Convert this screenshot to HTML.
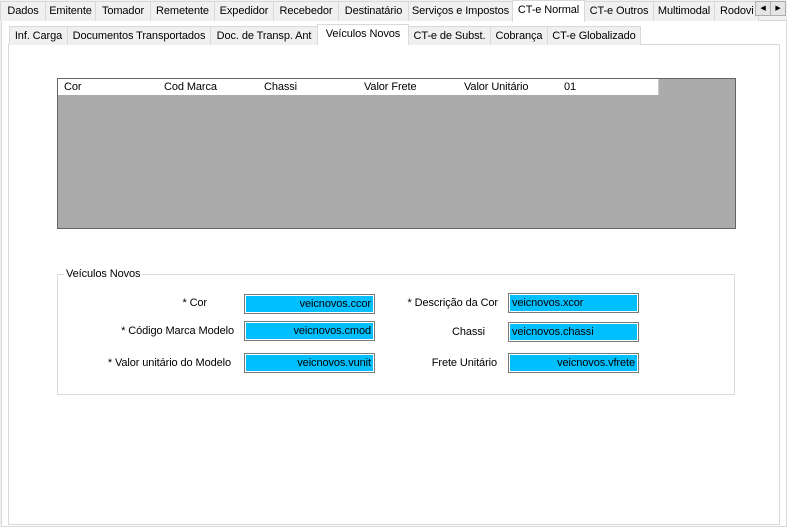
<!DOCTYPE html>
<html><head><meta charset="utf-8"><style>
*{margin:0;padding:0;box-sizing:border-box}
body{width:787px;height:527px;background:#f0f0f0;font-family:"Liberation Sans",sans-serif;font-size:11px;color:#000;position:relative;overflow:hidden;letter-spacing:-0.1px}
.a{position:absolute;white-space:nowrap}
.t{position:absolute;top:1px;height:20px;border:1px solid #d9d9d9;border-bottom:none;background:#f0f0f0;text-align:center;line-height:19px}
.t2{position:absolute;top:26px;height:19px;border:1px solid #d9d9d9;border-bottom:none;background:#f0f0f0;text-align:center;line-height:18px}
.sel{background:#fff;z-index:2}
.h{position:absolute;top:79px;height:16px;background:#fff;border-right:1px solid #c8c8c8;line-height:17px;padding-left:6px}
.in{position:absolute;width:131px;height:20px;border:1px solid #7a7a7a;background:#00bfff;box-shadow:inset 0 0 0 1px #fff;line-height:19px;padding:0 3px;color:#000}
.r{text-align:right}
.lb{position:absolute;text-align:right;width:200px}
</style></head><body>
<div class="a" style="left:1px;top:20px;width:786px;height:507px;border:1px solid #d9d9d9;background:#fff"></div>
<div class="t" style="left:0;width:46px">Dados</div>
<div class="t" style="left:45px;width:51px">Emitente</div>
<div class="t" style="left:95px;width:56px">Tomador</div>
<div class="t" style="left:150px;width:65px">Remetente</div>
<div class="t" style="left:214px;width:60px">Expedidor</div>
<div class="t" style="left:273px;width:66px">Recebedor</div>
<div class="t" style="left:338px;width:71px">Destinatário</div>
<div class="t" style="left:408px;width:105px">Serviços e Impostos</div>
<div class="t sel" style="left:512px;width:73px;top:0;height:22px;line-height:18px">CT-e Normal</div>
<div class="t" style="left:584px;width:70px">CT-e Outros</div>
<div class="t" style="left:653px;width:62px">Multimodal</div>
<div class="t" style="left:714px;width:45px;text-align:left;padding-left:5px;overflow:hidden">Rodovi</div>
<div class="a" style="left:755px;top:1px;width:16px;height:15px;border:1px solid #adadad;background:#e5e5e5;font-size:7px;text-align:center;line-height:13px">◀</div>
<div class="a" style="left:770px;top:1px;width:16px;height:15px;border:1px solid #adadad;background:#e5e5e5;font-size:7px;text-align:center;line-height:13px">▶</div>

<div class="a" style="left:8px;top:44px;width:772px;height:481px;border:1px solid #d9d9d9;background:#fff"></div>
<div class="t2" style="left:9px;width:59px">Inf. Carga</div>
<div class="t2" style="left:67px;width:144px">Documentos Transportados</div>
<div class="t2" style="left:210px;width:108px">Doc. de Transp. Ant</div>
<div class="t2 sel" style="left:317px;width:92px;top:24px;height:21px;line-height:18px">Veículos Novos</div>
<div class="t2" style="left:408px;width:83px">CT-e de Subst.</div>
<div class="t2" style="left:490px;width:58px">Cobrança</div>
<div class="t2" style="left:547px;width:94px">CT-e Globalizado</div>

<div class="a" style="left:57px;top:78px;width:679px;height:151px;border:1px solid #646464;background:#ababab"></div>
<div class="h" style="left:58px;width:101px">Cor</div>
<div class="h" style="left:158px;width:101px">Cod Marca</div>
<div class="h" style="left:258px;width:101px">Chassi</div>
<div class="h" style="left:358px;width:101px">Valor Frete</div>
<div class="h" style="left:458px;width:101px">Valor Unitário</div>
<div class="h" style="left:558px;width:101px">01</div>

<div class="a" style="left:57px;top:274px;width:678px;height:121px;border:1px solid #dcdcdc"></div>
<div class="a" style="left:64px;top:268px;background:#fff;padding:0 2px">Veículos Novos</div>

<div class="lb" style="left:7px;top:297px">* Cor</div>
<div class="lb" style="left:34px;top:325px">* Código Marca Modelo</div>
<div class="lb" style="left:31px;top:357px">* Valor unitário do Modelo</div>
<div class="in r" style="left:244px;top:294px">veicnovos.ccor</div>
<div class="in r" style="left:244px;top:321px">veicnovos.cmod</div>
<div class="in r" style="left:244px;top:353px">veicnovos.vunit</div>

<div class="lb" style="left:298px;top:297px">* Descrição da Cor</div>
<div class="lb" style="left:285px;top:326px">Chassi</div>
<div class="lb" style="left:297px;top:357px">Frete Unitário</div>
<div class="in" style="left:508px;top:293px">veicnovos.xcor</div>
<div class="in" style="left:508px;top:322px">veicnovos.chassi</div>
<div class="in r" style="left:508px;top:353px">veicnovos.vfrete</div>
</body></html>
